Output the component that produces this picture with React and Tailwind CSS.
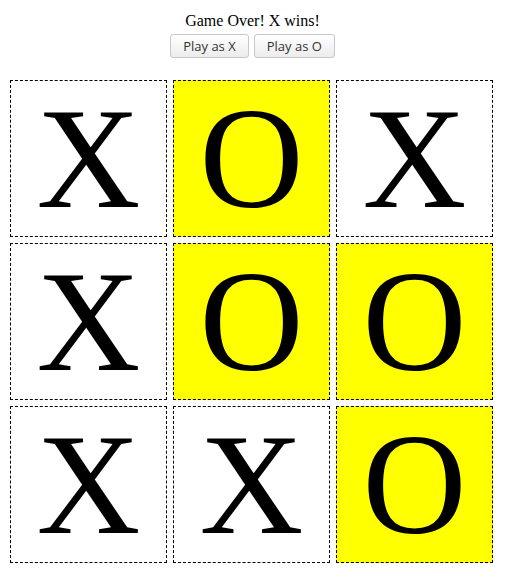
import React from "react";

const board = ["X", "O", "X", "X", "O", "O", "X", "X", "O"];

function Btn({ children }) {
  return (
    <button
      className="h-[24px] px-[12px] rounded-[3px] border border-[#c8c8c8] bg-gradient-to-b from-white to-[#ececec] text-[13px] text-[#333] leading-none"
      style={{ fontFamily: '"Open Sans", sans-serif' }}
    >
      {children}
    </button>
  );
}

export default function App() {
  return (
    <div className="w-[505px] h-[581px] bg-white" style={{ fontFamily: '"Liberation Serif", serif' }}>
      <div className="pt-[11px] text-center text-[16px] leading-[19px] text-black">Game Over! X wins!</div>
      <div className="mt-[4px] flex justify-center gap-[5px]">
        <Btn>Play as X</Btn>
        <Btn>Play as O</Btn>
      </div>
      <div className="mt-[22px] ml-[10px] grid grid-cols-[157px_157px_157px] gap-[6px]">
        {board.map((v, i) => (
          <div
            key={i}
            className={
              "h-[157px] border border-dashed border-black flex items-center justify-center text-[144px] leading-none " +
              (v === "O" ? "bg-[#ffff00]" : "bg-white")
            }
          >
            {v}
          </div>
        ))}
      </div>
    </div>
  );
}
